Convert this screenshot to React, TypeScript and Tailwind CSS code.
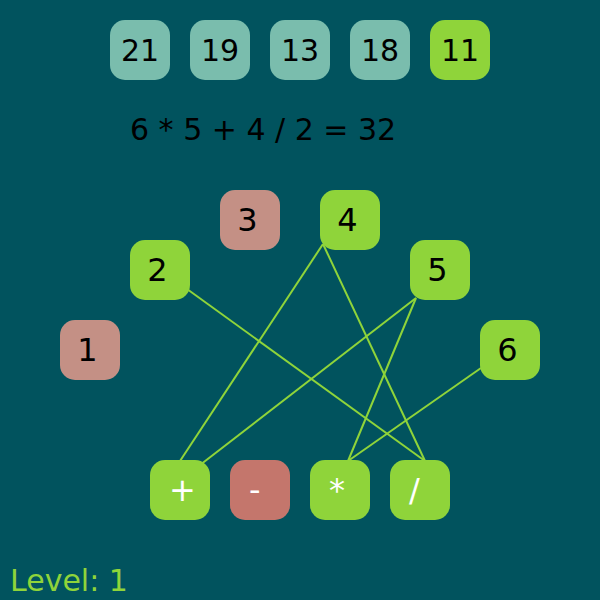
import React from "react";

const font = { fontFamily: '"DejaVu Sans", sans-serif' };

type Node = { label: string; x: number; y: number; color: string };

const nodes: Node[] = [
  { label: "1", x: 60, y: 320, color: "bg-[#c49085]" },
  { label: "2", x: 130, y: 240, color: "bg-[#8fd43a]" },
  { label: "3", x: 220, y: 190, color: "bg-[#c49085]" },
  { label: "4", x: 320, y: 190, color: "bg-[#8fd43a]" },
  { label: "5", x: 410, y: 240, color: "bg-[#8fd43a]" },
  { label: "6", x: 480, y: 320, color: "bg-[#8fd43a]" },
];

const ops: Node[] = [
  { label: "+", x: 150, y: 460, color: "bg-[#8fd43a]" },
  { label: "-", x: 230, y: 460, color: "bg-[#c4766c]" },
  { label: "*", x: 310, y: 460, color: "bg-[#8fd43a]" },
  { label: "/", x: 390, y: 460, color: "bg-[#8fd43a]" },
];

const lines: [number, number, number, number][] = [
  [187, 289, 425, 461],
  [323, 244, 180, 461],
  [323, 244, 425, 461],
  [416, 298, 200, 465],
  [416, 298, 348, 461],
  [481, 368, 348, 461],
];

const targets = [
  { v: "21", c: "bg-[#7abdad]" },
  { v: "19", c: "bg-[#7abdad]" },
  { v: "13", c: "bg-[#7abdad]" },
  { v: "18", c: "bg-[#7abdad]" },
  { v: "11", c: "bg-[#8fd43a]" },
];

export default function App() {
  return (
    <div
      className="relative w-[600px] h-[600px] bg-[#01535e] overflow-hidden text-black"
      style={font}
    >
      <div className="flex gap-5 pl-[110px] pt-5">
        {targets.map((t) => (
          <div
            key={t.v}
            className={`w-[60px] h-[60px] rounded-[15px] ${t.c} flex items-center justify-center text-[30px]`}
          >
            {t.v}
          </div>
        ))}
      </div>
      <div className="pl-[130px] mt-[32px] text-[30px] leading-[35px]">
        6 * 5 + 4 / 2 = 32
      </div>

      <svg className="absolute left-0 top-0" width="600" height="600">
        {lines.map(([x1, y1, x2, y2], i) => (
          <line
            key={i}
            x1={x1}
            y1={y1}
            x2={x2}
            y2={y2}
            stroke="#8fd43a"
            strokeWidth="2"
          />
        ))}
      </svg>

      {nodes.map((n) => (
        <div
          key={n.label}
          className={`absolute w-[60px] h-[60px] rounded-[15px] ${n.color} flex items-center justify-center pr-[5px] text-[32px]`}
          style={{ left: n.x, top: n.y }}
        >
          {n.label}
        </div>
      ))}
      {ops.map((n) => (
        <div
          key={n.label}
          className={`absolute w-[60px] h-[60px] rounded-[15px] ${n.color} flex items-center justify-start pl-[19px] text-[32px] text-white`}
          style={{ left: n.x, top: n.y }}
        >
          {n.label}
        </div>
      ))}

      <div className="absolute left-[10px] bottom-[2px] text-[30px] leading-[35px] text-[#8fd43a]">
        Level: 1
      </div>
    </div>
  );
}
